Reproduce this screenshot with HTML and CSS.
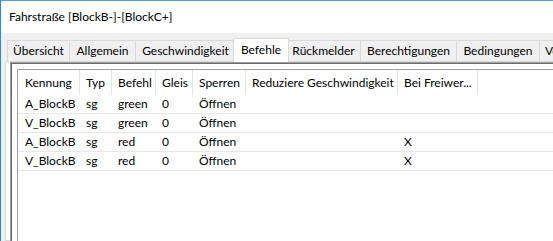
FILE: index.html
```html
<!DOCTYPE html>
<html>
<head>
<meta charset="utf-8">
<link rel="stylesheet" href="styles.css">
</head>
<body>
<div class="window">
  <div class="titlebar">Fahrstraße [BlockB-]-[BlockC+]</div>
  <div class="client">
    <div class="tabctl">
      <div class="tabs">
        <div class="tab t1">Übersicht</div>
        <div class="tab t2">Allgemein</div>
        <div class="tab t3">Geschwindigkeit</div>
        <div class="tab t4 selected">Befehle</div>
        <div class="tab t5">Rückmelder</div>
        <div class="tab t6">Berechtigungen</div>
        <div class="tab t7">Bedingungen</div>
        <div class="tab t8">Verschlüsse</div>
      </div>
      <div class="page">
        <div class="panel">
          <div class="panel-inner">
            <div class="listview">
              <div class="grid">
                <div class="hd first">Kennung</div>
                <div class="hd">Typ</div>
                <div class="hd">Befehl</div>
                <div class="hd">Gleis</div>
                <div class="hd">Sperren</div>
                <div class="hd">Reduziere Geschwindigkeit</div>
                <div class="hd">Bei Freiwer...</div>
                <div class="hd last"></div>

                <div class="cell first">A_BlockB</div>
                <div class="cell">sg</div>
                <div class="cell">green</div>
                <div class="cell">0</div>
                <div class="cell">Öffnen</div>
                <div class="cell"></div>
                <div class="cell"></div>
                <div class="cell"></div>

                <div class="cell first">V_BlockB</div>
                <div class="cell">sg</div>
                <div class="cell">green</div>
                <div class="cell">0</div>
                <div class="cell">Öffnen</div>
                <div class="cell"></div>
                <div class="cell"></div>
                <div class="cell"></div>

                <div class="cell first">A_BlockB</div>
                <div class="cell">sg</div>
                <div class="cell">red</div>
                <div class="cell">0</div>
                <div class="cell">Öffnen</div>
                <div class="cell"></div>
                <div class="cell">X</div>
                <div class="cell"></div>

                <div class="cell first">V_BlockB</div>
                <div class="cell">sg</div>
                <div class="cell">red</div>
                <div class="cell">0</div>
                <div class="cell">Öffnen</div>
                <div class="cell"></div>
                <div class="cell">X</div>
                <div class="cell"></div>
              </div>
            </div>
          </div>
        </div>
      </div>
    </div>
  </div>
</div>
</body>
</html>
```
FILE: styles.css
```css
html, body {
  margin: 0;
  padding: 0;
  width: 553px;
  height: 241px;
  overflow: hidden;
  background: #f0f0f0;
}
body {
  font-family: Lato, "Noto Sans", sans-serif;
  font-size: 12px;
  color: #000;
}
.window {
  width: 640px;
  height: 241px;
  box-sizing: border-box;
  border-left: 1px solid #2b88d8;
  border-top: 1px solid #4f9be0;
  display: flex;
  flex-direction: column;
}
.titlebar {
  height: 32px;
  line-height: 32px;
  background: #fff;
  padding-left: 8px;
  flex: none;
}
.client {
  flex: 1;
  background: #f0f0f0;
  padding: 5px 0 0 4px;
  display: flex;
  flex-direction: column;
  min-height: 0;
}
.tabctl {
  flex: 1;
  display: flex;
  flex-direction: column;
  min-height: 0;
}
.tabs {
  display: flex;
  height: 23px;
  padding-left: 2px;
  align-items: flex-end;
  flex: none;
}
.tab {
  box-sizing: border-box;
  height: 21px;
  border: 1px solid #d9d9d9;
  border-bottom: none;
  background: #f0f0f0;
  margin-right: -1px;
  text-align: center;
  line-height: 19px;
  white-space: nowrap;
  flex: none;
}
.t1 { width: 63px; }
.t2 { width: 67px; }
.t3 { width: 101px; }
.t4 { width: 56px; }
.t5 { width: 75px; }
.t6 { width: 97px; }
.t7 { width: 84px; }
.t8 { width: 80px; text-align: left; padding-left: 5px; }
.tab.selected {
  height: 24px;
  margin-left: -2px;
  margin-right: -3px;
  margin-bottom: -1px;
  background: #fff;
  position: relative;
  z-index: 1;
  line-height: 21px;
}
.page {
  flex: 1;
  border: 1px solid #d9d9d9;
  background: #fff;
  padding-left: 4px;
  min-height: 0;
}
.panel {
  height: 100%;
  border-top: 1px solid #a0a0a0;
  border-left: 1px solid #a0a0a0;
}
.panel-inner {
  height: 100%;
  border-top: 1px solid #696969;
  border-left: 1px solid #696969;
  padding: 5px 0 0 5px;
  background: #fff;
}
.listview {
  height: 100%;
  border-top: 1px solid #a0a0a0;
  border-left: 1px solid #a0a0a0;
  background: #fff;
}
.grid {
  display: grid;
  grid-template-columns: 62px 32px 44px 37px 53px 152px 80px 1fr;
}
.hd {
  box-sizing: border-box;
  height: 25px;
  line-height: 25px;
  padding-left: 6px;
  border-right: 1px solid #e5e5e5;
  white-space: nowrap;
  overflow: hidden;
}
.hd.last { border-right: none; }
.cell {
  box-sizing: border-box;
  height: 19px;
  line-height: 18px;
  padding-left: 6px;
  border-bottom: 1px solid #e8e8e8;
  white-space: nowrap;
  overflow: hidden;
}
.first { padding-left: 7px; }
```
